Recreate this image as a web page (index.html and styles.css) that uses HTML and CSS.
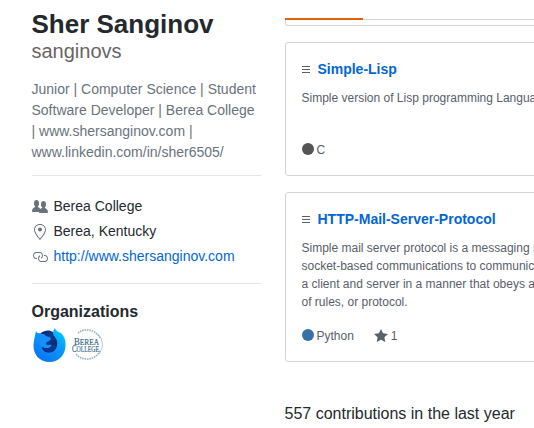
FILE: index.html
```html
<!DOCTYPE html>
<html lang="en">
<head>
<meta charset="utf-8">
<title>Sher Sanginov</title>
<link rel="stylesheet" href="styles.css">
</head>
<body>
<div class="page">
  <aside class="profile">
    <h1 class="names"><span class="fullname">Sher Sanginov</span><span class="username">sanginovs</span></h1>
    <div class="bio">Junior | Computer Science | Student Software Developer | Berea College | www.shersanginov.com | www.linkedin.com/in/sher6505/</div>
    <ul class="details">
      <li><svg class="octicon" width="16" height="16" viewBox="0 0 16 16"><path fill-rule="evenodd" d="M16 12.999c0 .439-.45 1-1 1H7.995c-.539 0-.994-.447-.995-.999H1c-.54 0-1-.561-1-1 0-2.634 3-4 3-4s.229-.409 0-1c-.841-.621-1.058-.59-1-3 .058-2.419 1.367-3 2.5-3s2.442.58 2.5 3c.058 2.41-.159 2.379-1 3-.229.59 0 1 0 1s1.549.711 2.42 2.088C9.196 9.369 10 8.999 10 8.999s.229-.409 0-1c-.841-.62-1.058-.59-1-3 .058-2.419 1.367-3 2.5-3s2.437.581 2.495 3c.059 2.41-.158 2.38-1 3-.229.59 0 1 0 1s3.005 1.366 3.005 4z"/></svg><span>Berea College</span></li>
      <li><svg class="octicon" width="16" height="16" viewBox="-2 0 16 16"><path fill-rule="evenodd" d="M6 0C2.69 0 0 2.5 0 5.5 0 10.02 6 16 6 16s6-5.98 6-10.5C12 2.5 9.31 0 6 0zm0 14.55C4.14 12.52 1 8.44 1 5.5 1 3.02 3.25 1 6 1c1.34 0 2.61.48 3.56 1.36.92.86 1.44 1.97 1.44 3.14 0 2.94-3.14 7.02-5 9.05zM8 5.5c0 1.11-.89 2-2 2-1.11 0-2-.89-2-2 0-1.11.89-2 2-2 1.11 0 2 .89 2 2z"/></svg><span>Berea, Kentucky</span></li>
      <li><svg class="octicon" width="16" height="16" viewBox="0 0 16 16"><path fill-rule="evenodd" d="M4 9h1v1H4c-1.5 0-3-1.69-3-3.5S2.55 3 4 3h4c1.45 0 3 1.69 3 3.5 0 1.41-.91 2.72-2 3.25V8.59c.58-.45 1-1.27 1-2.09C10 5.22 8.98 4 8 4H4c-.98 0-2 1.22-2 2.5S3 9 4 9zm9-3h-1v1h1c1 0 2 1.22 2 2.5S13.98 12 13 12H9c-.98 0-2-1.22-2-2.5 0-.83.42-1.64 1-2.09V6.25c-1.09.53-2 1.84-2 3.25C6 11.31 7.55 13 9 13h4c1.45 0 3-1.69 3-3.5S14.5 6 13 6z"/></svg><a href="#">http://www.shersanginov.com</a></li>
    </ul>
    <section class="orgs">
      <h2>Organizations</h2>
      <div class="avatars">
        <svg width="35" height="35" viewBox="0 0 35 35">
          <defs>
            <linearGradient id="fox" x1="1" y1="0" x2="0.3" y2="1"><stop offset="0" stop-color="#00d8ff"/><stop offset="0.45" stop-color="#0a9cff"/><stop offset="1" stop-color="#0a74f0"/></linearGradient>
            <radialGradient id="globe" cx="0.6" cy="0.3" r="0.7"><stop offset="0" stop-color="#0a4394"/><stop offset="1" stop-color="#04195c"/></radialGradient>
          </defs>
          <path fill="url(#fox)" d="M4 3C5 6 7 6 9 5L21 5C21 3 22 1 23 0C24 3 26 4 29 5C32 8 34 12 33.500 18C33 28 26 34 17.500 34C8 34 1.500 27 1.500 18C1.500 13 3 8 4 3Z"/>
          <path fill="url(#globe)" d="M9 5C12 2 18 1.500 21 4C20.500 8 24 9 25 13C26 19 23 24 18 24.500C14 25 11 23 10 20L12 18C9 16 8 13 9 11Z"/>
          <path fill="#158ffa" d="M4 4C6 6 9 5.500 12 6L14 8L19 10C19 12 17 13 15 14L14 16C16 18 18 16 20 17C19 20 16 21 12.500 20C8 19 7 15 8 10Z"/>
          <path fill="#06398f" d="M12.500 20C16 21 19 19.500 20 17C21 16.500 23 17 24 18C23 22 20 24 17 24C14 24 12 22 10 19Z"/>
        </svg>
        <svg width="35" height="35" viewBox="0 0 35 35">
          <g fill="none" stroke="#9bb1bf" stroke-width="1.600">
            <path d="M7 5A14.500 14.500 0 0 1 29 10" stroke-dasharray="1.600 .8"/>
            <path d="M29 23A14.500 14.500 0 0 1 5 26" stroke-dasharray="1.600 .8"/>
            <path d="M27 6A14.500 14.500 0 0 1 28 26" stroke-width=".7"/>
          </g>
          <g class="seal"><text x="3" y="16.500" textLength="25" lengthAdjust="spacingAndGlyphs"><tspan class="cap">B</tspan>EREA</text><text x="1" y="23.500" textLength="27" lengthAdjust="spacingAndGlyphs"><tspan class="cap">C</tspan>OLLEGE</text></g>
        </svg>
      </div>
    </section>
  </aside>
  <main class="content">
    <div class="tabs"><div class="selected"></div></div>
    <article class="card previous"></article>
    <article class="card lisp">
      <h3><svg class="grabber" width="8" height="16" viewBox="0 0 8 16"><path d="M8 4v1H0V4h8zM0 8h8V7H0v1zm0 3h8v-1H0v1z"/></svg><a href="#">Simple-Lisp</a></h3>
      <p>Simple version of Lisp programming Language</p>
      <div class="meta"><span class="dot c"></span><span>C</span></div>
    </article>
    <article class="card mail">
      <h3><svg class="grabber" width="8" height="16" viewBox="0 0 8 16"><path d="M8 4v1H0V4h8zM0 8h8V7H0v1zm0 3h8v-1H0v1z"/></svg><a href="#">HTTP-Mail-Server-Protocol</a></h3>
      <p>Simple mail server protocol is a messaging s<br>socket-based communications to communic<br>a client and server in a manner that obeys a<br>of rules, or protocol.</p>
      <div class="meta"><span class="dot python"></span><span>Python</span><svg class="star" width="14" height="16" viewBox="0 0 14 16"><path d="M14 6l-4.900-.64L7 1 4.900 5.360 0 6l3.600 3.260L2.670 14 7 11.670 11.330 14l-.93-4.740L14 6z"/></svg><span>1</span></div>
    </article>
    <h2 class="contributions">557 contributions in the last year</h2>
  </main>
</div>
</body>
</html>
```
FILE: styles.css
```css
* { box-sizing: border-box; }
body {
  margin: 0;
  overflow: hidden;
  background: #fff;
  color: #24292e;
  font: 14px/1.5 "Liberation Sans", Arial, sans-serif;
}
h1, h2, h3, p, ul { margin: 0; padding: 0; }
a { color: #0366d6; text-decoration: none; }
svg { display: block; flex: none; }

.page {
  display: flex;
  gap: 23.5px;
  height: 428px;
  padding-left: 31.5px;
  overflow: hidden;
}
.profile { flex: none; width: 229.5px; padding-top: 9px; }
.names span { display: block; }
.fullname { font-size: 26px; line-height: 30px; }
.username { color: #666; font-size: 20px; font-weight: 300; line-height: 24px; }
.bio { margin-top: 16px; color: #6a737d; }
.details {
  margin-top: 12px;
  padding: 16px 0;
  border: solid #e1e4e8;
  border-width: 1px 0;
  list-style: none;
}
.details li { display: flex; align-items: center; gap: 6px; padding-top: 4px; }
.octicon { fill: #6a737d; }
.orgs { padding-top: 16px; }
.orgs h2 { font-size: 16px; line-height: 24px; }
.avatars { display: flex; gap: 4px; margin-top: 4px; }
.seal { fill: #2c6584; stroke: #2c6584; stroke-width: .15px; font: 8px "Liberation Serif", serif; }
.cap { font-size: 9.5px; }

.content { flex: none; width: 742px; padding-top: 18px; }
.tabs { height: 2px; background: linear-gradient(#fff 50%, #d1d5da 50%); }
.selected { width: 78px; height: 2px; background: #e36209; }
.card {
  display: flex;
  flex-direction: column;
  width: 363px;
  padding: 16px;
  border: 1px solid #d1d5da;
  border-radius: 3px;
}
.previous { height: 6px; padding: 0; border-top: 0; border-radius: 0 0 3px 3px; }
.lisp { height: 134px; margin-top: 16px; }
.mail { height: 170px; margin-top: 16px; }
.card h3 { display: flex; align-items: center; gap: 8px; font-size: 14px; line-height: 21px; }
.grabber { fill: #586069; }
.card p { margin-top: 9px; color: #586069; font-size: 12px; line-height: 18px; white-space: nowrap; }
.meta { display: flex; align-items: center; margin-top: auto; color: #586069; font-size: 12px; line-height: 18px; }
.dot { width: 12px; height: 12px; margin: 0 3px 2px 0; border-radius: 50%; }
.c { background: #555; }
.python { background: #3572a5; }
.star { margin: 0 3px 1px 20px; fill: #586069; }
.contributions { margin-top: 40px; font-size: 16px; font-weight: 400; line-height: 24px; }
```
